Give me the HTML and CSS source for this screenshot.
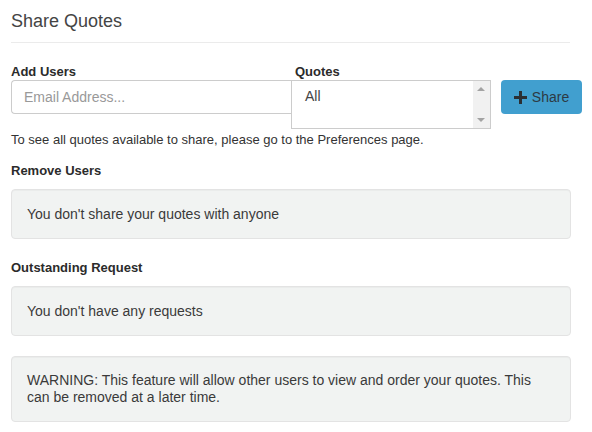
FILE: index.html
```
<!DOCTYPE html>
<html>
<head>
<meta charset="utf-8">
<link rel="stylesheet" href="styles.css">
</head>
<body>
<div class="page">
  <h1 class="title">Share Quotes</h1>
  <div class="rule"></div>
  <div class="form-row">
    <div class="col-users">
      <div class="label">Add Users</div>
      <div class="input">Email Address...</div>
    </div>
    <div class="col-quotes">
      <div class="label label-quotes">Quotes</div>
      <div class="select">
        <div class="option">All</div>
        <div class="scrollbar">
          <span class="arrow-up"></span>
          <span class="arrow-down"></span>
        </div>
      </div>
    </div>
    <div class="col-btn">
      <div class="btn"><svg class="plus" width="13" height="13" viewBox="0 0 13 13"><path d="M5 0h3v5h5v3H8v5H5V8H0V5h5z" fill="#2b2f33"/></svg><span>Share</span></div>
    </div>
  </div>
  <p class="help">To see all quotes available to share, please go to the Preferences page.</p>
  <div class="section-label">Remove Users</div>
  <div class="well">You don't share your quotes with anyone</div>
  <div class="section-label second">Outstanding Request</div>
  <div class="well">You don't have any requests</div>
  <div class="well warning">WARNING: This feature will allow other users to view and order your quotes. This can be removed at a later time.</div>
</div>
</body>
</html>
```
FILE: styles.css
```
* { box-sizing: border-box; }
html, body { margin: 0; padding: 0; background: #fff; }
body {
  font-family: "Liberation Sans", Arial, sans-serif;
  font-size: 14px;
  color: #333;
  width: 592px;
  height: 432px;
  overflow: hidden;
}
.page { padding: 0 21px 0 11px; }
.title {
  margin: 0;
  padding-top: 10px;
  font-size: 18px;
  line-height: 22px;
  font-weight: normal;
  color: #444;
}
.rule {
  margin-top: 10px;
  border-top: 1px solid #ebebeb;
  width: 559px;
}
.form-row {
  display: flex;
  margin-top: 20px;
  width: 571px;
}
.label {
  font-weight: bold;
  font-size: 13px;
  line-height: 17px;
  color: #2b2b2b;
  height: 17px;
}
.label-quotes { padding-left: 4px; }
.col-users { width: 280px; }
.input {
  height: 34px;
  border: 1px solid #ccc;
  border-radius: 4px 0 0 4px;
  border-right: none;
  padding: 0 12px;
  line-height: 32px;
  color: #999;
  font-size: 14px;
}
.col-quotes { width: 200px; }
.select {
  height: 49px;
  border: 1px solid #ccc;
  display: flex;
  justify-content: space-between;
}
.option {
  padding: 5px 13px;
  line-height: 20px;
  color: #444;
}
.scrollbar {
  width: 17px;
  background: #f1f1f1;
  position: relative;
}
.arrow-up, .arrow-down {
  position: absolute;
  left: 4px;
  width: 0; height: 0;
  border-left: 4px solid transparent;
  border-right: 4px solid transparent;
}
.arrow-up { top: 6px; border-bottom: 4px solid #a3a3a3; }
.arrow-down { bottom: 6px; border-top: 4px solid #a3a3a3; }
.col-btn { padding-left: 10px; padding-top: 17px; }
.btn {
  width: 81px;
  height: 34px;
  background: #419fcf;
  border-radius: 4px;
  display: flex;
  align-items: center;
  justify-content: center;
  gap: 5px;
  color: #2d3a44;
  font-size: 14px;
}
.plus { display: block; }
.help {
  margin: 2px 0 0;
  font-size: 13px;
  line-height: 17px;
  color: #333;
}
.section-label {
  margin-top: 14px;
  font-weight: bold;
  font-size: 13px;
  line-height: 17px;
  color: #2b2b2b;
}
.section-label.second { margin-top: 20px; }
.well {
  margin-top: 10px;
  width: 560px;
  background: #f1f3f2;
  border: 1px solid #e3e3e3;
  border-radius: 4px;
  padding: 15px;
  line-height: 18px;
  color: #3a3a3a;
  box-shadow: inset 0 1px 1px rgba(0,0,0,0.03);
}
.well.warning {
  margin-top: 20px;
  line-height: 17px;
}
```
